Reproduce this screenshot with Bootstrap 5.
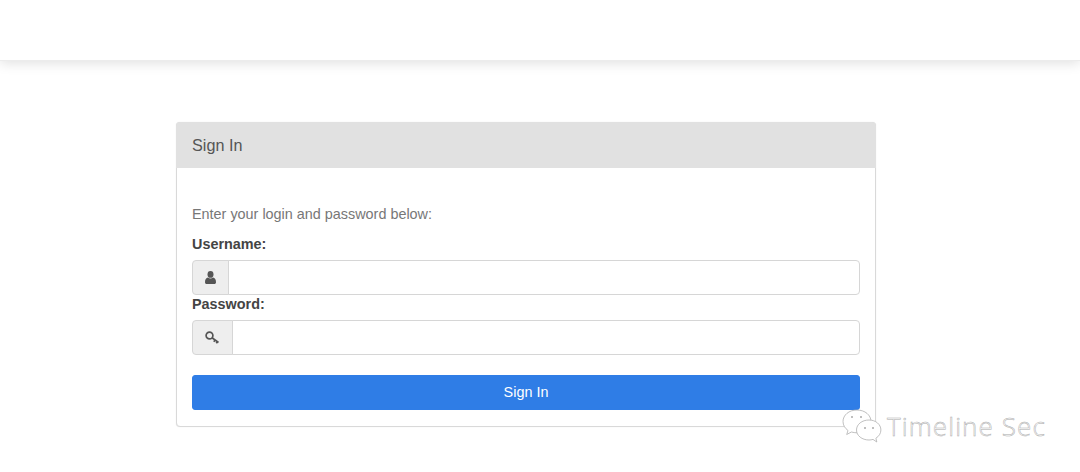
<!DOCTYPE html>
<html lang="en">

<head>
    <meta charset="UTF-8">
    <meta name="viewport" content="width=device-width, initial-scale=1.0">
    <title>Sign In</title>
    <link href="https://cdn.jsdelivr.net/npm/bootstrap@5.3.0/dist/css/bootstrap.min.css" rel="stylesheet">
    <style>
        html, body {
            height: 472px;
            overflow: hidden;
        }

        body {
            background-color: #fff;
            font-family: "Liberation Sans", Arial, sans-serif;
            font-size: 14.4px;
            color: #555;
            position: relative;
        }

        .top-strip {
            height: 61px;
            background-color: #fff;
            border-bottom: 1px solid #ececec;
            box-shadow: 0 2px 12px rgba(0, 0, 0, .13);
        }

        .login-panel {
            width: 700px;
            margin: 61px 0 0 176px;
            border: 1px solid #d9d9d9;
            border-radius: 4px;
            box-shadow: 0 0 1px #d9d9d9;
        }

        .login-head {
            height: 46px;
            margin: -1px -1px 0;
            padding: 0 16px;
            display: flex;
            align-items: center;
            background-color: #e1e1e1;
            border: 0;
            font-size: 16.2px;
            color: #555;
        }

        .login-head:first-child {
            border-radius: 4px 4px 0 0;
        }

        .login-body {
            padding: 37px 15px 16px;
        }

        .login-intro {
            font-size: 14.4px;
            line-height: 18px;
            color: #777;
            margin-bottom: 13px;
        }

        .login-label {
            display: block;
            font-size: 14.4px;
            line-height: 17px;
            font-weight: 700;
            color: #444;
            margin-bottom: 7px;
        }

        .login-group {
            height: 35px;
            margin-bottom: 1px;
        }

        .login-group .input-group-text {
            padding: 0;
            justify-content: center;
            background-color: #eee;
            border-color: #d6d6d6;
            border-radius: 4px 0 0 4px;
        }

        .addon-user {
            width: 37px;
        }

        .addon-key {
            width: 41px;
        }

        .login-group .form-control {
            height: 35px;
            border-color: #d6d6d6;
            border-radius: 0 4px 4px 0;
        }

        .login-submit {
            display: block;
            width: 100%;
            height: 35px;
            margin-top: 20px;
            padding: 0;
            font-size: 14.4px;
            color: #fff;
            background-color: #2f7de6;
            border-color: #2f7de6;
            border-radius: 3px;
        }

        .wm {
            position: absolute;
            left: 842px;
            top: 408px;
            display: flex;
            align-items: center;
            gap: 4px;
        }

        .wm-text {
            font-family: "Open Sans", sans-serif;
            font-size: 26px;
            font-weight: 300;
            line-height: 36px;
            letter-spacing: 1.1px;
            color: #fff;
            -webkit-text-stroke: .5px #aaa;
        }
    </style>
</head>

<body>
    <div class="top-strip"></div>

    <div class="card login-panel">
        <div class="card-header login-head">Sign In</div>
        <div class="card-body login-body">
            <p class="login-intro">Enter your login and password below:</p>
            <form>
                <label class="login-label" for="username">Username:</label>
                <div class="input-group login-group">
                    <span class="input-group-text addon-user">
                        <svg width="11" height="13" viewBox="0 0 11 13" fill="#555">
                            <ellipse cx="5.5" cy="3.4" rx="3" ry="3.4" />
                            <path d="M0 11.2C0 8.6 1.1 7 3 6.6c.7.6 1.5.9 2.5.9s1.800-.3 2.500-.9c1.900.4 3 2 3 4.600C11 12.300 10.300 13 9.300 13H1.700C.7 13 0 12.300 0 11.200z" />
                        </svg>
                    </span>
                    <input type="text" class="form-control" id="username">
                </div>
                <label class="login-label" for="password">Password:</label>
                <div class="input-group login-group">
                    <span class="input-group-text addon-key">
                        <svg width="15" height="14" viewBox="0 0 15 14" fill="none" stroke="#555" stroke-width="1.700">
                            <circle cx="4.500" cy="4.500" r="3.400" />
                            <path d="M7 6.800l6.500 4.700M10 9l-1.200 1.800M12.300 10.700l-1 1.600" />
                        </svg>
                    </span>
                    <input type="password" class="form-control" id="password">
                </div>
                <button type="button" class="btn btn-primary login-submit">Sign In</button>
            </form>
        </div>
    </div>

    <div class="wm">
        <svg width="41" height="35" viewBox="0 0 41 35" fill="#fff" stroke="#b0b0b0" stroke-width=".8">
            <path d="M15 1C7 1 1 6 1 12.500c0 3.700 2 6.800 5 9l-1.300 4 4.700-2.500c1.800.5 3.700.8 5.600.8 8 0 14-5 14-11.300S23 1 15 1z" />
            <path d="M27 11c-7 0-12.500 4.300-12.500 10S20 31 27 31c1.400 0 2.800-.2 4-.6l3.800 2.600-.9-3.800c3-1.800 5-4.800 5-8.200 0-5.700-5.300-10-11.900-10z" />
            <circle cx="10" cy="8" r="1" fill="#aaa" stroke="none" />
            <circle cx="19" cy="8" r="1" fill="#aaa" stroke="none" />
            <circle cx="23" cy="19" r="1" fill="#aaa" stroke="none" />
            <circle cx="31" cy="19" r="1" fill="#aaa" stroke="none" />
        </svg>
        <span class="wm-text">Timeline Sec</span>
    </div>

    <script src="https://cdn.jsdelivr.net/npm/bootstrap@5.3.0/dist/js/bootstrap.bundle.min.js"></script>
</body>

</html>
